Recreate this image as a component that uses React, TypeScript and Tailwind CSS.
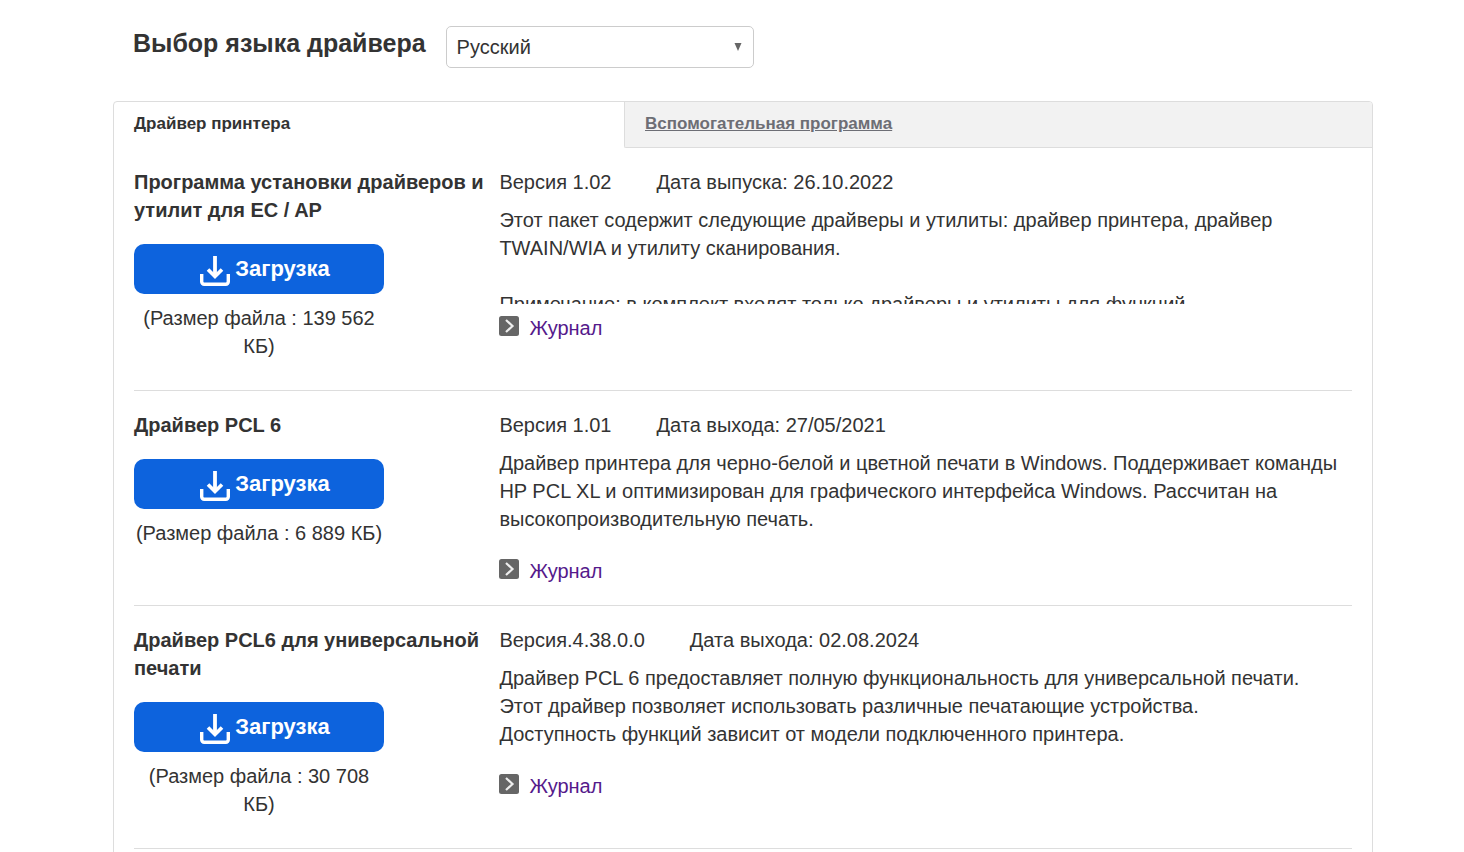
import { useState } from "react";

type Driver = {
  title: string;
  size: string;
  version: string;
  date: string;
  description: string[];
};

const drivers: Driver[] = [
  {
    title: "Программа установки драйверов и утилит для EC / AP",
    size: "(Размер файла : 139 562 КБ)",
    version: "Версия 1.02",
    date: "Дата выпуска: 26.10.2022",
    description: [
      "Этот пакет содержит следующие драйверы и утилиты: драйвер принтера, драйвер TWAIN/WIA и утилиту сканирования.",
      "",
      "Примечание: в комплект входят только драйверы и утилиты для функций",
    ],
  },
  {
    title: "Драйвер PCL 6",
    size: "(Размер файла : 6 889 КБ)",
    version: "Версия 1.01",
    date: "Дата выхода: 27/05/2021",
    description: [
      "Драйвер принтера для черно-белой и цветной печати в Windows. Поддерживает команды HP PCL XL и оптимизирован для графического интерфейса Windows. Рассчитан на высокопроизводительную печать.",
    ],
  },
  {
    title: "Драйвер PCL6 для универсальной печати",
    size: "(Размер файла : 30 708 КБ)",
    version: "Версия.4.38.0.0",
    date: "Дата выхода: 02.08.2024",
    description: [
      "Драйвер PCL 6 предоставляет полную функциональность для универсальной печати.",
      "Этот драйвер позволяет использовать различные печатающие устройства.",
      "Доступность функций зависит от модели подключенного принтера.",
    ],
  },
];

const DownloadIcon = () => (
  <svg
    viewBox="0 0 30 30"
    className="mt-1 h-[30px] w-[30px] shrink-0"
    fill="none"
    stroke="currentColor"
    aria-hidden="true"
  >
    <path d="M15 0V21" strokeWidth="3.8" />
    <path d="M8 13.5l7 7 7-7" strokeWidth="3.6" />
    <path
      d="M1.7 18V25.800a2.500 2.500 0 0 0 2.500 2.500H25.800a2.500 2.500 0 0 0 2.500-2.500V18"
      strokeWidth="3.4"
    />
  </svg>
);

const LogIcon = () => (
  <svg viewBox="0 0 20 20" className="h-5 w-5 shrink-0" aria-hidden="true">
    <rect width="20" height="20" rx="2.5" fill="#666666" />
    <path
      d="M7 4L13.5 10 7 16"
      fill="none"
      stroke="#eeeeee"
      strokeWidth="2.2"
    />
  </svg>
);

const DriverRow = ({ driver }: { driver: Driver }) => (
  <li className="flex border-b border-[#dddddd] pt-5">
    <div className="w-[30%] shrink-0 pr-3 pb-[30px]">
      <h2 className="font-bold">{driver.title}</h2>
      <div className="w-[250px] text-center">
        <button
          type="button"
          className="mt-5 mb-[10px] flex h-[50px] w-full items-center justify-center gap-[5px] rounded-[10px] bg-[#0d63dd] pl-3 text-[22px] font-bold text-white"
        >
          <DownloadIcon />
          Загрузка
        </button>
        <p>{driver.size}</p>
      </div>
    </div>
    <div className="min-w-0 flex-1 pb-5">
      <div className="mb-[10px] flex gap-[45px]">
        <p>{driver.version}</p>
        <p>{driver.date}</p>
      </div>
      <div className="mb-[10px] h-[98px] overflow-hidden">
        {driver.description.map((line, i) => (
          <p key={i} className="min-h-7">
            {line}
          </p>
        ))}
      </div>
      <a href="#log" className="flex w-fit gap-[10px] text-[#551a8b]">
        <span className="pt-[2px]">
          <LogIcon />
        </span>
        Журнал
      </a>
    </div>
  </li>
);

const App = () => {
  const [language, setLanguage] = useState("ru");

  return (
    <main className="h-dvh overflow-hidden bg-white pt-[26px] pr-[91px] pl-[113px] font-['Liberation_Sans',Arial,sans-serif] text-xl leading-7 text-[#333333]">
      <div className="mb-[33px] flex items-start gap-5 pl-5">
        <label htmlFor="language" className="pt-[3px] text-[25px] font-bold">
          Выбор языка драйвера
        </label>
        <div className="relative w-[308px]">
          <select
            id="language"
            value={language}
            onChange={(e) => setLanguage(e.target.value)}
            className="h-[42px] w-full appearance-none rounded-[5px] border border-[#cccccc] bg-white px-[10px]"
          >
            <option value="ru">Русский</option>
            <option value="en">English</option>
          </select>
          <svg
            viewBox="0 0 8 8"
            className="pointer-events-none absolute top-[17px] right-3 h-2 w-2"
            aria-hidden="true"
          >
            <path d="M0.5 0h7L4 8z" fill="#666666" />
          </svg>
        </div>
      </div>

      <div className="rounded-t-[4px] border border-[#dddddd]">
        <nav className="flex overflow-hidden rounded-t-[3px] text-[17px] leading-7 font-bold">
          <div className="w-[510px] shrink-0 px-5 pt-2">Драйвер принтера</div>
          <div className="h-[46px] flex-1 rounded-bl-[2px] border-b border-l border-[#dddddd] bg-[#f2f2f2] px-5 pt-2">
            <a href="#utility" className="text-[#6d6e75] underline">
              Вспомогательная программа
            </a>
          </div>
        </nav>
        <ul className="px-5 pb-5">
          {drivers.map((driver) => (
            <DriverRow key={driver.title} driver={driver} />
          ))}
        </ul>
      </div>
    </main>
  );
};

export default App;
